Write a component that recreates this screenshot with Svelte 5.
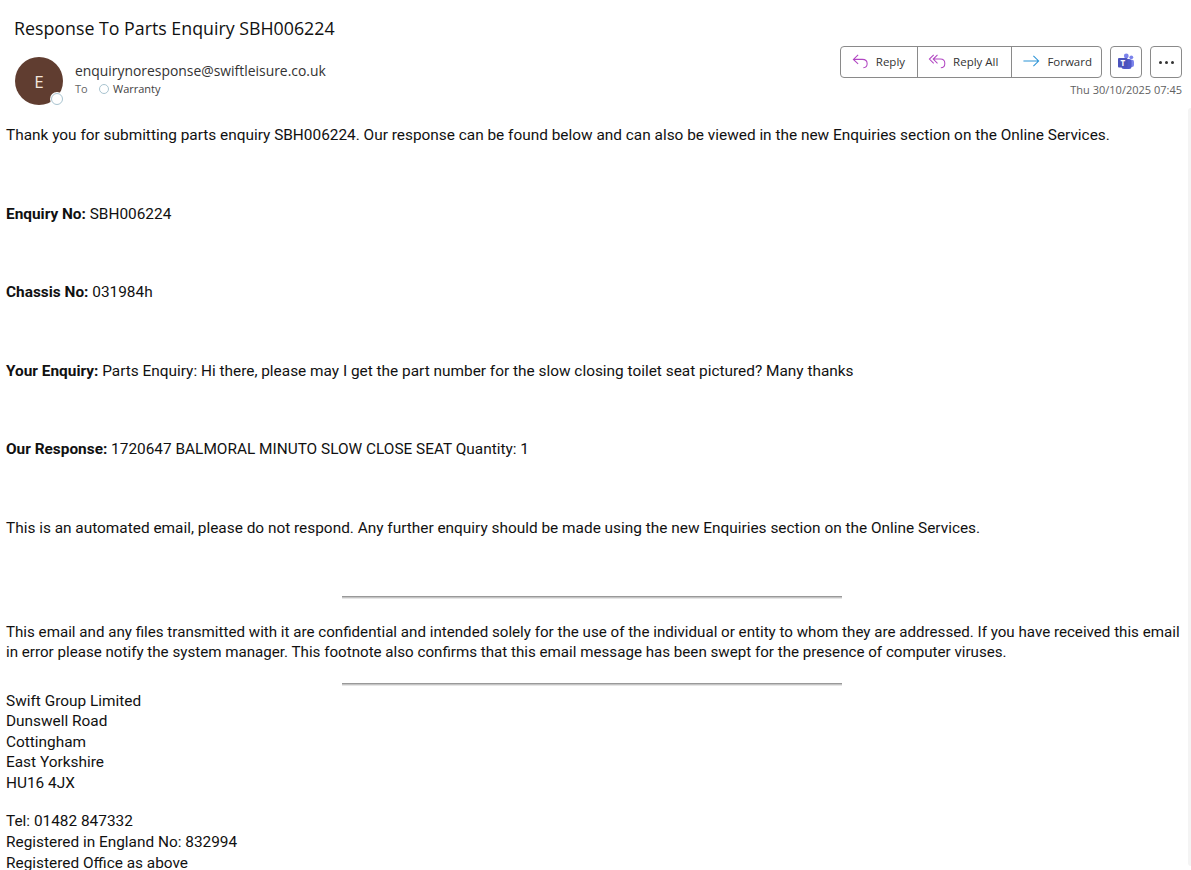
<script>
  const paragraphs = [
    { text: "Thank you for submitting parts enquiry SBH006224. Our response can be found below and can also be viewed in the new Enquiries section on the Online Services." },
    { label: "Enquiry No:", text: " SBH006224" },
    { label: "Chassis No:", text: " 031984h" },
    { label: "Your Enquiry:", text: " Parts Enquiry: Hi there, please may I get the part number for the slow closing toilet seat pictured? Many thanks" },
    { label: "Our Response:", text: " 1720647 BALMORAL MINUTO SLOW CLOSE SEAT Quantity: 1" },
    { text: "This is an automated email, please do not respond. Any further enquiry should be made using the new Enquiries section on the Online Services." },
  ];
  const address = ["Swift Group Limited", "Dunswell Road", "Cottingham", "East Yorkshire", "HU16 4JX"];
  const legal = ["Tel: 01482 847332", "Registered in England No: 832994", "Registered Office as above"];
</script>

<div class="page">
  <h1>Response To Parts Enquiry SBH006224</h1>

  <header>
    <div class="avatar">
      E
      <span class="presence"></span>
    </div>
    <div class="who">
      <div class="from">enquirynoresponse@swiftleisure.co.uk</div>
      <div class="to">
        <span>To</span>
        <span class="dot"></span>
        <span>Warranty</span>
      </div>
    </div>
    <div class="side">
      <div class="actions">
        <div class="group">
          <button>
            <svg width="19" height="20" viewBox="0 0 20 20" fill="none" stroke="#b146c2" stroke-width="1.1">
              <path d="M7.5 3.5 2.5 8.3l5 4.700M2.500 8.300h9.500c3 0 5 2 5 4.500s-1.500 4-4 4.200" />
            </svg>
            Reply
          </button>
          <button>
            <svg width="19" height="20" viewBox="0 0 20 20" fill="none" stroke="#b146c2" stroke-width="1.1">
              <path d="M6 3.500 1.500 8l4.500 4.500M10 3.500 5.500 8l4.500 4.500M5.500 8H13c3 0 4.700 2 4.700 4.500S16 17 13.500 17" />
            </svg>
            Reply All
          </button>
          <button>
            <svg width="19" height="20" viewBox="0 0 20 20" fill="none" stroke="#2b93d6" stroke-width="1.1">
              <path d="M1.500 10h16M12 4.500l5.500 5.500-5.500 5.500" />
            </svg>
            Forward
          </button>
        </div>
        <button class="square" aria-label="Share to Teams">
          <svg width="18" height="18" viewBox="0 0 18 18">
            <circle cx="14.300" cy="4.300" r="1.900" fill="#7b83eb" />
            <circle cx="9.300" cy="3" r="2.400" fill="#7b83eb" />
            <rect x="11" y="6.800" width="6" height="7.200" rx="2" fill="#7b83eb" />
            <rect x="4.500" y="6" width="10" height="10" rx="2.500" fill="#5059c9" />
            <rect x="1" y="5" width="9.500" height="9.500" rx="1" fill="#4b53bc" />
            <text x="5.700" y="12.800" text-anchor="middle" class="teams-t">T</text>
          </svg>
        </button>
        <button class="square dots" aria-label="More actions">
          <i></i><i></i><i></i>
        </button>
      </div>
      <div class="date">Thu 30/10/2025 07:45</div>
    </div>
  </header>

  <main>
    {#each paragraphs as p}
      <p class="para">
        {#if p.label}<b>{p.label}</b>{/if}{p.text}
      </p>
    {/each}

    <hr />
    <p class="notice">
      This email and any files transmitted with it are confidential and intended solely for the use of the individual or entity to whom they are addressed. If you have received this email in error please notify the system manager. This footnote also confirms that this email message has been swept for the presence of computer viruses.
    </p>
    <hr />

    <div class="block">
      {#each address as line}
        <div>{line}</div>
      {/each}
    </div>
    <div class="block legal">
      {#each legal as line}
        <div>{line}</div>
      {/each}
    </div>
  </main>

  <div class="scrollbar"></div>
</div>

<style>
  :global(body) {
    background: #fff;
  }

  .page {
    position: relative;
    height: 870px;
    overflow: hidden;
    background: #fff;
  }

  .scrollbar {
    position: absolute;
    top: 108px;
    right: 0;
    width: 3px;
    height: 758px;
    background: #f4f4f4;
    border-radius: 3px 0 0 3px;
  }

  h1 {
    margin: 0;
    padding: 16px 0 0 14px;
    font: 400 17.800px/24px "Open Sans", sans-serif;
    color: #111;
  }

  header {
    display: flex;
    padding: 6px 9px 0 15px;
    height: 61px;
  }

  .avatar {
    position: relative;
    width: 48px;
    height: 48px;
    margin-top: 11px;
    border-radius: 50%;
    background: #603d30;
    color: #f3e6dc;
    display: flex;
    align-items: center;
    justify-content: center;
    font: 400 17px "Open Sans", sans-serif;
  }

  .presence {
    position: absolute;
    right: 0;
    bottom: 0;
    width: 10px;
    height: 10px;
    border-radius: 50%;
    border: 1.500px solid #a9c4d0;
    background: #fff;
    box-shadow: 0 0 0 1px #fff;
  }

  .who {
    margin-left: 12px;
    padding-top: 15px;
    flex: 1;
  }

  .from {
    font: 400 13.900px/19px "Open Sans", sans-serif;
    color: #333;
  }

  .to {
    display: flex;
    align-items: center;
    font: 400 11px/16px "Open Sans", sans-serif;
    color: #424242;
    margin-top: 1px;
  }

  .to span:first-child {
    color: #666;
    width: 24px;
  }

  .dot {
    width: 8px;
    height: 8px;
    margin-right: 4px;
    border: 1px solid #a9c4d0;
    border-radius: 50%;
  }

  .side {
    display: flex;
    flex-direction: column;
    align-items: flex-end;
  }

  .actions {
    display: flex;
    gap: 8px;
  }

  .group {
    display: flex;
    height: 32px;
    border: 1px solid #8a8a8a;
    border-radius: 4px;
    box-sizing: border-box;
  }

  button {
    display: flex;
    align-items: center;
    background: none;
    border: 0;
    padding: 0;
    color: #333;
    font: 400 11.500px "Open Sans", sans-serif;
  }

  .group button {
    padding: 0 12px 2px 10px;
    gap: 6px;
    border-left: 1px solid #8a8a8a;
  }

  .group button:first-child {
    border-left: 0;
  }

  .group button:nth-child(2) {
    padding-right: 13px;
  }

  .group button:last-child {
    padding-right: 9px;
  }

  .square {
    width: 32px;
    height: 32px;
    box-sizing: border-box;
    border: 1px solid #8a8a8a;
    border-radius: 4px;
    justify-content: center;
  }

  .teams-t {
    font: 700 8px "Open Sans", sans-serif;
    fill: #fff;
  }

  .dots {
    gap: 3px;
  }

  .dots i {
    width: 3px;
    height: 3px;
    border-radius: 50%;
    background: #333;
  }

  .date {
    margin-top: 4px;
    font: 400 11px/16px "Open Sans", sans-serif;
    color: #616161;
  }

  main {
    padding: 18px 6px 0;
    font: 400 15.400px/20.500px Roboto, sans-serif;
    color: #111;
  }

  .para {
    margin: 0 0 58px;
  }

  hr {
    width: 500px;
    height: 3px;
    margin: 0 0 0 336px;
    box-sizing: border-box;
    border: 0;
    border-top: 1px solid #999;
    border-bottom: 1px solid #e6e6e6;
    background: #c4c4c4;
  }

  .para:last-of-type {
    margin-bottom: 56px;
  }

  .notice {
    margin: 22.500px 0 20px;
    font-size: 15.150px;
  }

  .block {
    margin-top: 5px;
  }

  .legal {
    margin-top: 18px;
    line-height: 21px;
  }
</style>
